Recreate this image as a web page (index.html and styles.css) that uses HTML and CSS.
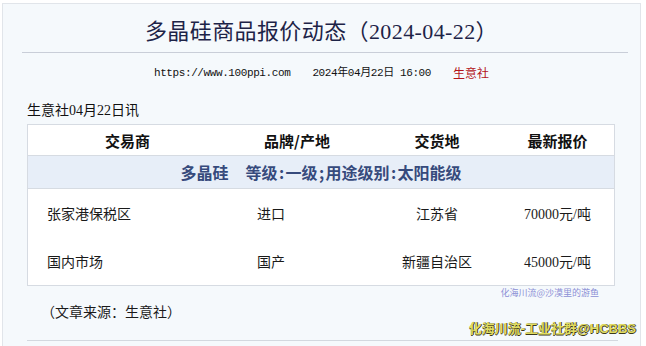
FILE: index.html
```html
<!DOCTYPE html>
<html lang="zh-CN">
<head>
<meta charset="utf-8">
<title>多晶硅商品报价动态</title>
<link rel="stylesheet" href="styles.css">
</head>
<body>
<div class="page">
  <h1 class="title">多晶硅商品报价动态（2024-04-22）</h1>
  <div class="rule"></div>
  <div class="meta">
    <span class="url">https://www.100ppi.com</span>
    <span class="date">2024年04月22日 16:00</span>
    <span class="src">生意社</span>
  </div>
  <div class="content">
    <p class="lead">生意社04月22日讯</p>
    <div class="table">
      <div class="row head">
        <div class="c c1">交易商</div>
        <div class="c c2">品牌/产地</div>
        <div class="c c3">交货地</div>
        <div class="c c4">最新报价</div>
      </div>
      <div class="cat">多晶硅<span class="catgap"></span>等级<span class="p">:</span>一级<span class="p">;</span>用途级别<span class="p">:</span>太阳能级</div>
      <div class="row data">
        <div class="c c1">张家港保税区</div>
        <div class="c c2">进口</div>
        <div class="c c3">江苏省</div>
        <div class="c c4">70000元/吨</div>
      </div>
      <div class="row data">
        <div class="c c1">国内市场</div>
        <div class="c c2">国产</div>
        <div class="c c3">新疆自治区</div>
        <div class="c c4">45000元/吨</div>
      </div>
    </div>
    <p class="source">（文章来源：生意社）</p>
    <div class="bottomrule"></div>
  </div>
  <div class="wm-small">化海川流@沙漠里的游鱼</div>
  <div class="wm-big">化海川流-工业社群@HCBBS</div>
</div>
</body>
</html>
```

FILE: styles.css
```css
html, body {
  margin: 0;
  padding: 0;
  background: #ffffff;
}
body {
  font-family: "Liberation Serif", "Noto Sans CJK SC", sans-serif;
  color: #222;
  overflow: hidden;
}
.page {
  position: relative;
  box-sizing: border-box;
  margin: 3px 0 0 2px;
  width: 639px;
  height: 343px;
  border: 1px solid #e1e5ea;
  border-bottom: none;
  background: #f5f9fc;
}
.title {
  margin: 13px 0 0 0;
  font-size: 22px;
  line-height: 30px;
  font-weight: 400;
  letter-spacing: 0.4px;
  text-align: center;
  color: #1d2347;
}
.rule {
  height: 1px;
  background: #c9ced8;
  margin: 5px 12px 0 19px;
}
.meta {
  margin-top: 12px;
  height: 16px;
  display: flex;
  justify-content: center;
  align-items: center;
  gap: 22px;
  font-size: 11px;
  line-height: 16px;
  color: #111;
}
.url, .date {
  font-family: "Liberation Mono", "Noto Sans CJK SC", monospace;
  letter-spacing: -0.4px;
}
.src {
  font-family: "Noto Sans CJK SC", sans-serif;
  font-size: 12px;
  color: #b3141a;
}
.content {
  padding: 0 0 0 24px;
}
.lead {
  margin: 20px 0 3px 0;
  font-size: 14px;
  line-height: 20px;
  color: #111;
}
.table {
  box-sizing: border-box;
  width: 588px;
  border: 1px solid #d6dbe2;
  background: #ffffff;
}
.row {
  display: grid;
  grid-template-columns: 199px 140px 140px 1fr;
  align-items: center;
}
.head {
  height: 30px;
  border-bottom: 1px solid #d6dbe2;
  font-family: "Noto Sans CJK SC", sans-serif;
  font-weight: 700;
  font-size: 15px;
  color: #111;
}
.head .c { text-align: center; }
.head .c4 { padding-right: 6px; }
.cat {
  height: 32px;
  line-height: 32px;
  border-bottom: 1px solid #d6dbe2;
  background: #e7eef8;
  text-align: center;
  font-family: "Noto Sans CJK SC", sans-serif;
  font-weight: 700;
  font-size: 16px;
  color: #364a7c;
}
.catgap {
  display: inline-block;
  width: 17px;
}
.p {
  display: inline-block;
  width: 8px;
  text-align: center;
}
.data {
  height: 48px;
  font-size: 14px;
  color: #1a1a1a;
}
.data .c1 { padding-left: 19px; }
.data .c2 { padding-left: 30px; }
.data .c3 { text-align: center; }
.data .c4 { text-align: center; padding-right: 6px; }
.source {
  margin: 17px 0 0 14px;
  font-size: 14px;
  line-height: 20px;
  color: #1a1a1a;
}
.bottomrule {
  margin-top: 17px;
  width: 591px;
  height: 1px;
  background: #d3d8df;
}
.wm-small {
  position: absolute;
  right: 41px;
  top: 284px;
  font-family: "Noto Sans CJK SC", sans-serif;
  font-size: 9px;
  line-height: 10px;
  color: #8c90d6;
}
.wm-big {
  position: absolute;
  right: 4px;
  top: 317px;
  font-family: "Liberation Sans", "Noto Sans CJK SC", sans-serif;
  font-weight: 700;
  font-size: 13px;
  line-height: 16px;
  color: #e0dd62;
  text-shadow: 1px 0 0 #3b3a1c, 0 1px 0 #3b3a1c;
}
```
